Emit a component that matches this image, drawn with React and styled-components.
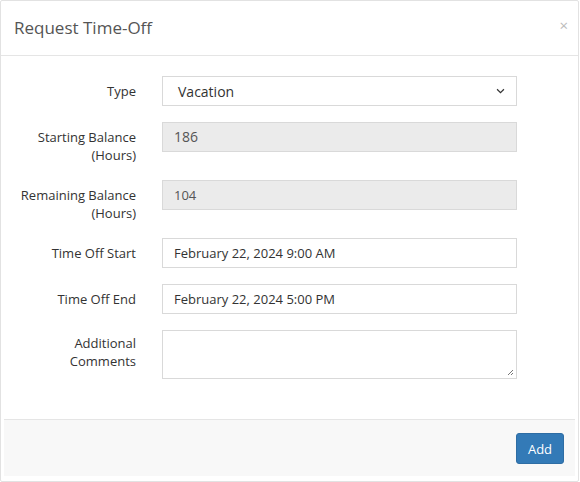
import React from "react";
import styled, { createGlobalStyle } from "styled-components";

const Global = createGlobalStyle`
  html, body { margin: 0; padding: 0; background: #fff; }
  * { box-sizing: border-box; }
  body { font-family: "Open Sans", "Noto Sans", sans-serif; color: #333; }
`;

const Modal = styled.div`
  width: 579px; height: 482px; border: 1px solid #e2e2e2; border-radius: 2px;
  display: flex; flex-direction: column; background: #fff;
`;
const Header = styled.div`
  height: 56px; border-bottom: 1px solid #e5e5e5; display: flex; align-items: center;
  justify-content: space-between; padding: 0 10px 0 13px;
`;
const Title = styled.h4`margin: 0; font-weight: 400; font-size: 17px; color: #555; padding-bottom: 1px;`;
const Close = styled.span`color: #bbb; font-size: 15px; align-self: flex-start; margin-top: 14px;`;
const Body = styled.div`padding: 20px 0 24px; flex: 1;`;
const Row = styled.div`
  display: grid; grid-template-columns: 135px 355px; column-gap: 26px; margin-bottom: 16px;
`;
const Label = styled.label`
  text-align: right; font-size: 13px; line-height: 18px; color: #333; padding-top: ${p => p.$pt || 6}px;
`;
const Field = styled.div`
  height: ${p => p.$h || 30}px; border: 1px solid #d9d9d9; background: ${p => p.$ro ? "#ebebeb" : "#fff"};
  display: flex; align-items: ${p => p.$top ? "flex-start" : "center"}; justify-content: space-between;
  padding: ${p => p.$top ? "4px 11px" : "0 11px"}; font-size: ${p => p.$big ? 14 : 13}px; color: ${p => p.$ro ? "#555" : "#333"};
  position: relative;
`;
const Grip = styled.svg`position: absolute; right: 2px; bottom: 2px;`;
const Footer = styled.div`
  margin: 0 3px 5px; height: 58px; background: #f8f8f8; border-top: 1px solid #e5e5e5;
  display: flex; align-items: center; justify-content: flex-end; padding-right: 11px;
`;
const Button = styled.button`
  background: #337ab7; border: 1px solid #2e6da4; color: #fff; border-radius: 3px;
  font-family: inherit; font-size: 13px; height: 31px; width: 48px; padding: 0; margin-top: 1px;
`;

export default function App() {
  return (
    <>
      <Global />
      <Modal>
        <Header><Title>Request Time-Off</Title><Close>×</Close></Header>
        <Body>
          <Row>
            <Label>Type</Label>
            <Field $big>
              <span style={{ paddingLeft: 4 }}>Vacation</span>
              <svg width="9" height="6" viewBox="0 0 10 7"><path d="M1 1.5l4 4 4-4" fill="none" stroke="#333" strokeWidth="1.4" /></svg>
            </Field>
          </Row>
          <Row>
            <Label>Starting Balance<br />(Hours)</Label>
            <Field $ro $big $top>186</Field>
          </Row>
          <Row>
            <Label>Remaining Balance<br />(Hours)</Label>
            <Field $ro>104</Field>
          </Row>
          <Row>
            <Label>Time Off Start</Label>
            <Field>February 22, 2024 9:00 AM</Field>
          </Row>
          <Row>
            <Label>Time Off End</Label>
            <Field>February 22, 2024 5:00 PM</Field>
          </Row>
          <Row>
            <Label $pt={4}>Additional<br />Comments</Label>
            <Field $h={49}>
              <Grip width="8" height="8" viewBox="0 0 8 8"><path d="M7 2L2 7M7 5L5 7" stroke="#777" strokeWidth="1" /></Grip>
            </Field>
          </Row>
        </Body>
        <Footer><Button>Add</Button></Footer>
      </Modal>
    </>
  );
}
